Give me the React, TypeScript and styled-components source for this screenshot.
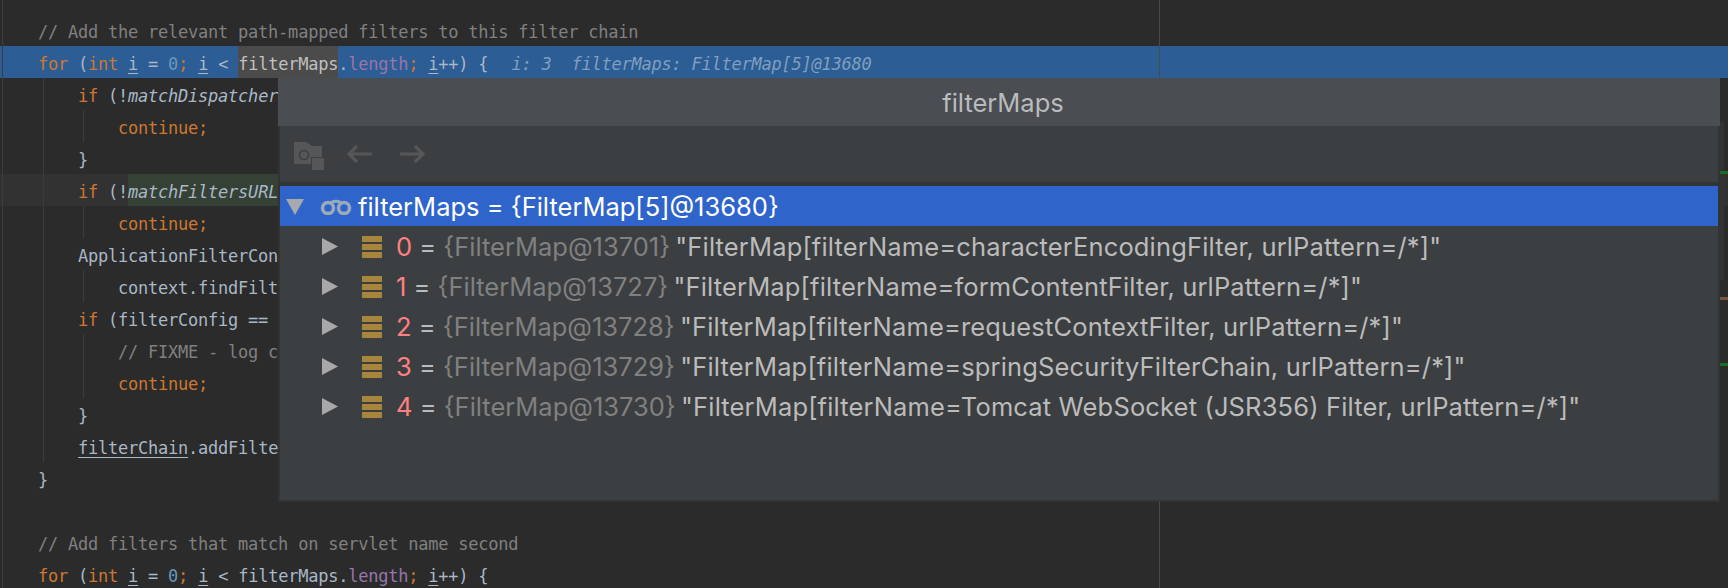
import React from 'react';
import styled, { createGlobalStyle } from 'styled-components';

const Global = createGlobalStyle`
  html, body {
    margin: 0;
    padding: 0;
    background: #2b2b2b;
  }
`;

const Screen = styled.div`
  position: relative;
  width: 1728px;
  height: 588px;
  overflow: hidden;
  background: #2b2b2b;
`;

const Editor = styled.div`
  padding-top: 14px;
  font-family: 'DejaVu Sans Mono', monospace;
  font-size: 17px;
  letter-spacing: -0.23px;
  color: #a9b7c6;
`;

const guideImage = (depth: number) =>
  depth === 0
    ? 'none'
    : depth === 1
      ? 'linear-gradient(#3b3b3b, #3b3b3b)'
      : 'linear-gradient(#3b3b3b, #3b3b3b), linear-gradient(#3b3b3b, #3b3b3b)';

const Line = styled.div<{ $current?: boolean; $active?: boolean; $depth?: number }>`
  height: 32px;
  line-height: 37px;
  padding-left: 38px;
  white-space: pre;
  background-color: ${({ $current, $active }) =>
    $current ? '#2c5d94' : $active ? '#323232' : 'transparent'};
  background-image: ${({ $depth = 0 }) => guideImage($depth)};
  background-repeat: no-repeat;
  background-size: 1px 100%;
  background-position: 43px 0, 83px 0;
`;

const Gutter = styled.div`
  position: absolute;
  top: 0;
  bottom: 0;
  left: 2px;
  width: 1px;
  background: #3c3c3c;
`;

const Margin = styled.div`
  position: absolute;
  top: 0;
  bottom: 0;
  left: 1159px;
  width: 1px;
  background: #4a4a4a;
`;

const Keyword = styled.span`
  color: #cc7832;
`;
const Num = styled.span`
  color: #6897bb;
`;
const Field = styled.span`
  color: #9876aa;
`;
const Comment = styled.span`
  color: #808080;
`;
const Reassigned = styled.span`
  text-decoration: underline;
  text-underline-offset: 3px;
`;
const Method = styled.span`
  font-style: italic;
`;
const Usage = styled.span`
  background: #4b4b4b;
  display: inline-block;
  height: 32px;
  color: #c0c0c0;
`;
const MatchUsage = styled.span`
  background: #344134;
  display: inline-block;
  height: 32px;
  font-style: italic;
`;
const Hint = styled.span`
  font-style: italic;
  color: #7f9fc0;
  margin-left: 3px;
`;

const Mark = styled.div<{ $top: number; $color: string }>`
  position: absolute;
  right: 0;
  top: ${({ $top }) => $top}px;
  width: 8px;
  height: 3px;
  background: ${({ $color }) => $color};
`;

const Stripe = styled.div`
  position: absolute;
  right: 4px;
  top: 121px;
  width: 4px;
  height: 159px;
  border-radius: 0 3px 3px 0;
  background: #333333;
`;

const Popup = styled.div`
  position: absolute;
  left: 278px;
  top: 78px;
  width: 1442px;
  height: 424px;
  box-sizing: border-box;
  display: flex;
  flex-direction: column;
  background: #3c3f41;
  border: solid #313335;
  border-width: 0 2px 2px 2px;
  font-family: Inter, 'Liberation Sans', sans-serif;
  font-size: 25.5px;
  color: #bbbbbb;
`;

const Title = styled.div`
  height: 48px;
  margin: 0 -2px;
  padding-left: 8px;
  flex-shrink: 0;
  display: flex;
  align-items: center;
  justify-content: center;
  background: #4a4d52;
  color: #b9bbbd;
`;

const Toolbar = styled.div`
  height: 60px;
  flex-shrink: 0;
  box-sizing: border-box;
  display: flex;
  align-items: center;
  gap: 22px;
  padding: 0 0 0 14px;
  border-bottom: 4px solid #323436;
`;

const ToolIcon = styled.svg`
  display: block;
  flex-shrink: 0;
  & + & + & {
    margin-left: 6px;
  }
`;

const FolderIcon = styled(ToolIcon)`
  margin-top: 4px;
`;

const Tree = styled.div`
  display: flex;
  flex-direction: column;
`;

const Row = styled.div<{ $selected?: boolean }>`
  height: 40px;
  box-sizing: border-box;
  padding-top: 1px;
  display: flex;
  align-items: center;
  white-space: pre;
  background: ${({ $selected }) => ($selected ? '#2f65ca' : 'transparent')};
  color: ${({ $selected }) => ($selected ? '#ffffff' : '#bbbbbb')};
  padding-left: ${({ $selected }) => ($selected ? '6px' : '42px')};
`;

const Arrow = styled.svg`
  display: block;
  flex-shrink: 0;
`;

const Bars = styled.span`
  width: 20px;
  height: 22px;
  margin: 0 14px 0 24px;
  flex-shrink: 0;
  background: repeating-linear-gradient(#a8853d 0 6px, transparent 6px 8px);
`;

const Glasses = styled.svg`
  display: block;
  flex-shrink: 0;
  margin: 0 6px 0 16px;
`;

const Key = styled.span`
  color: #ff8080;
`;
const Ref = styled.span`
  color: #808080;
`;
const Value = styled.span`
  margin-left: -2px;
  letter-spacing: 0.15px;
`;

const entries = [
  ['13701', 'characterEncodingFilter'],
  ['13727', 'formContentFilter'],
  ['13728', 'requestContextFilter'],
  ['13729', 'springSecurityFilterChain'],
  ['13730', 'Tomcat WebSocket (JSR356) Filter']
];

const App = () => (
  <Screen>
    <Global />
    <Editor>
      <Line>
        <Comment>// Add the relevant path-mapped filters to this filter chain</Comment>
      </Line>
      <Line $current>
        <Keyword>for</Keyword> (<Keyword>int</Keyword> <Reassigned>i</Reassigned> = <Num>0</Num>
        <Keyword>;</Keyword> <Reassigned>i</Reassigned> &lt; <Usage>filterMaps</Usage>.<Field>length</Field>
        <Keyword>;</Keyword> <Reassigned>i</Reassigned>++) {'{'}  <Hint>i: 3  filterMaps: FilterMap[5]@13680</Hint>
      </Line>
      <Line $depth={1}>
        {'    '}<Keyword>if</Keyword> (!<Method>matchDispatcher</Method>
      </Line>
      <Line $depth={2}>
        {'        '}<Keyword>continue;</Keyword>
      </Line>
      <Line $depth={1}>{'    }'}</Line>
      <Line $active $depth={1}>
        {'    '}<Keyword>if</Keyword> (!<MatchUsage>matchFiltersURL</MatchUsage>
      </Line>
      <Line $depth={2}>
        {'        '}<Keyword>continue;</Keyword>
      </Line>
      <Line $depth={1}>{'    '}ApplicationFilterCon</Line>
      <Line $depth={2}>{'        '}context.findFilt</Line>
      <Line $depth={1}>
        {'    '}<Keyword>if</Keyword> (filterConfig ==
      </Line>
      <Line $depth={2}>
        {'        '}<Comment>// FIXME - log c</Comment>
      </Line>
      <Line $depth={2}>
        {'        '}<Keyword>continue;</Keyword>
      </Line>
      <Line $depth={1}>{'    }'}</Line>
      <Line $depth={1}>
        {'    '}<Reassigned>filterChain</Reassigned>.addFilte
      </Line>
      <Line>{'}'}</Line>
      <Line />
      <Line>
        <Comment>// Add filters that match on servlet name second</Comment>
      </Line>
      <Line>
        <Keyword>for</Keyword> (<Keyword>int</Keyword> <Reassigned>i</Reassigned> = <Num>0</Num>
        <Keyword>;</Keyword> <Reassigned>i</Reassigned> &lt; filterMaps.<Field>length</Field>
        <Keyword>;</Keyword> <Reassigned>i</Reassigned>++) {'{'}
      </Line>
    </Editor>

    <Gutter />
    <Margin />
    <Stripe />
    <Mark $top={171} $color="#1f6b25" />
    <Mark $top={297} $color="#7a5240" />
    <Mark $top={363} $color="#1f6b25" />

    <Popup>
      <Title>filterMaps</Title>
      <Toolbar>
        <FolderIcon width="30" height="28" viewBox="0 0 30 28">
          <path d="M0 0h12l6 4h10v11H17v7H0z" fill="#555657" />
          <circle cx="10" cy="13" r="4.5" fill="none" stroke="#3c3f41" strokeWidth="1.5" />
          <rect x="18" y="16" width="12" height="12" fill="#555657" />
        </FolderIcon>
        <ToolIcon width="26" height="20" viewBox="0 0 26 20">
          <path d="M11 2 3 10l8 8M3 10h23" fill="none" stroke="#555657" strokeWidth="3.2" />
        </ToolIcon>
        <ToolIcon width="26" height="20" viewBox="0 0 26 20">
          <path d="M15 2l8 8-8 8M23 10H0" fill="none" stroke="#555657" strokeWidth="3.2" />
        </ToolIcon>
      </Toolbar>
      <Tree>
        <Row $selected>
          <Arrow width="18" height="16" viewBox="0 0 18 16">
            <path d="M0 0h18L9 16z" fill="#a6a9ad" />
          </Arrow>
          <Glasses width="32" height="16" viewBox="0 0 32 16">
            <circle cx="8" cy="9" r="5.5" fill="none" stroke="#9aa9bc" strokeWidth="3.5" />
            <circle cx="24" cy="9" r="5.5" fill="none" stroke="#9aa9bc" strokeWidth="3.5" />
            <path d="M11 3.5q5-2.5 10 0" fill="none" stroke="#9aa9bc" strokeWidth="3" />
          </Glasses>
          filterMaps = {'{'}FilterMap[5]@13680{'}'}
        </Row>
        {entries.map(([id, name], idx) => (
          <Row key={id}>
            <Arrow width="16" height="17" viewBox="0 0 16 17">
              <path d="M0 0l16 8.5L0 17z" fill="#a8a8a8" />
            </Arrow>
            <Bars />
            <Key>{idx}</Key> = <Ref>{`{FilterMap@${id}}`}</Ref>
            <Value>{` "FilterMap[filterName=${name}, urlPattern=/*]"`}</Value>
          </Row>
        ))}
      </Tree>
    </Popup>
  </Screen>
);

export default App;
